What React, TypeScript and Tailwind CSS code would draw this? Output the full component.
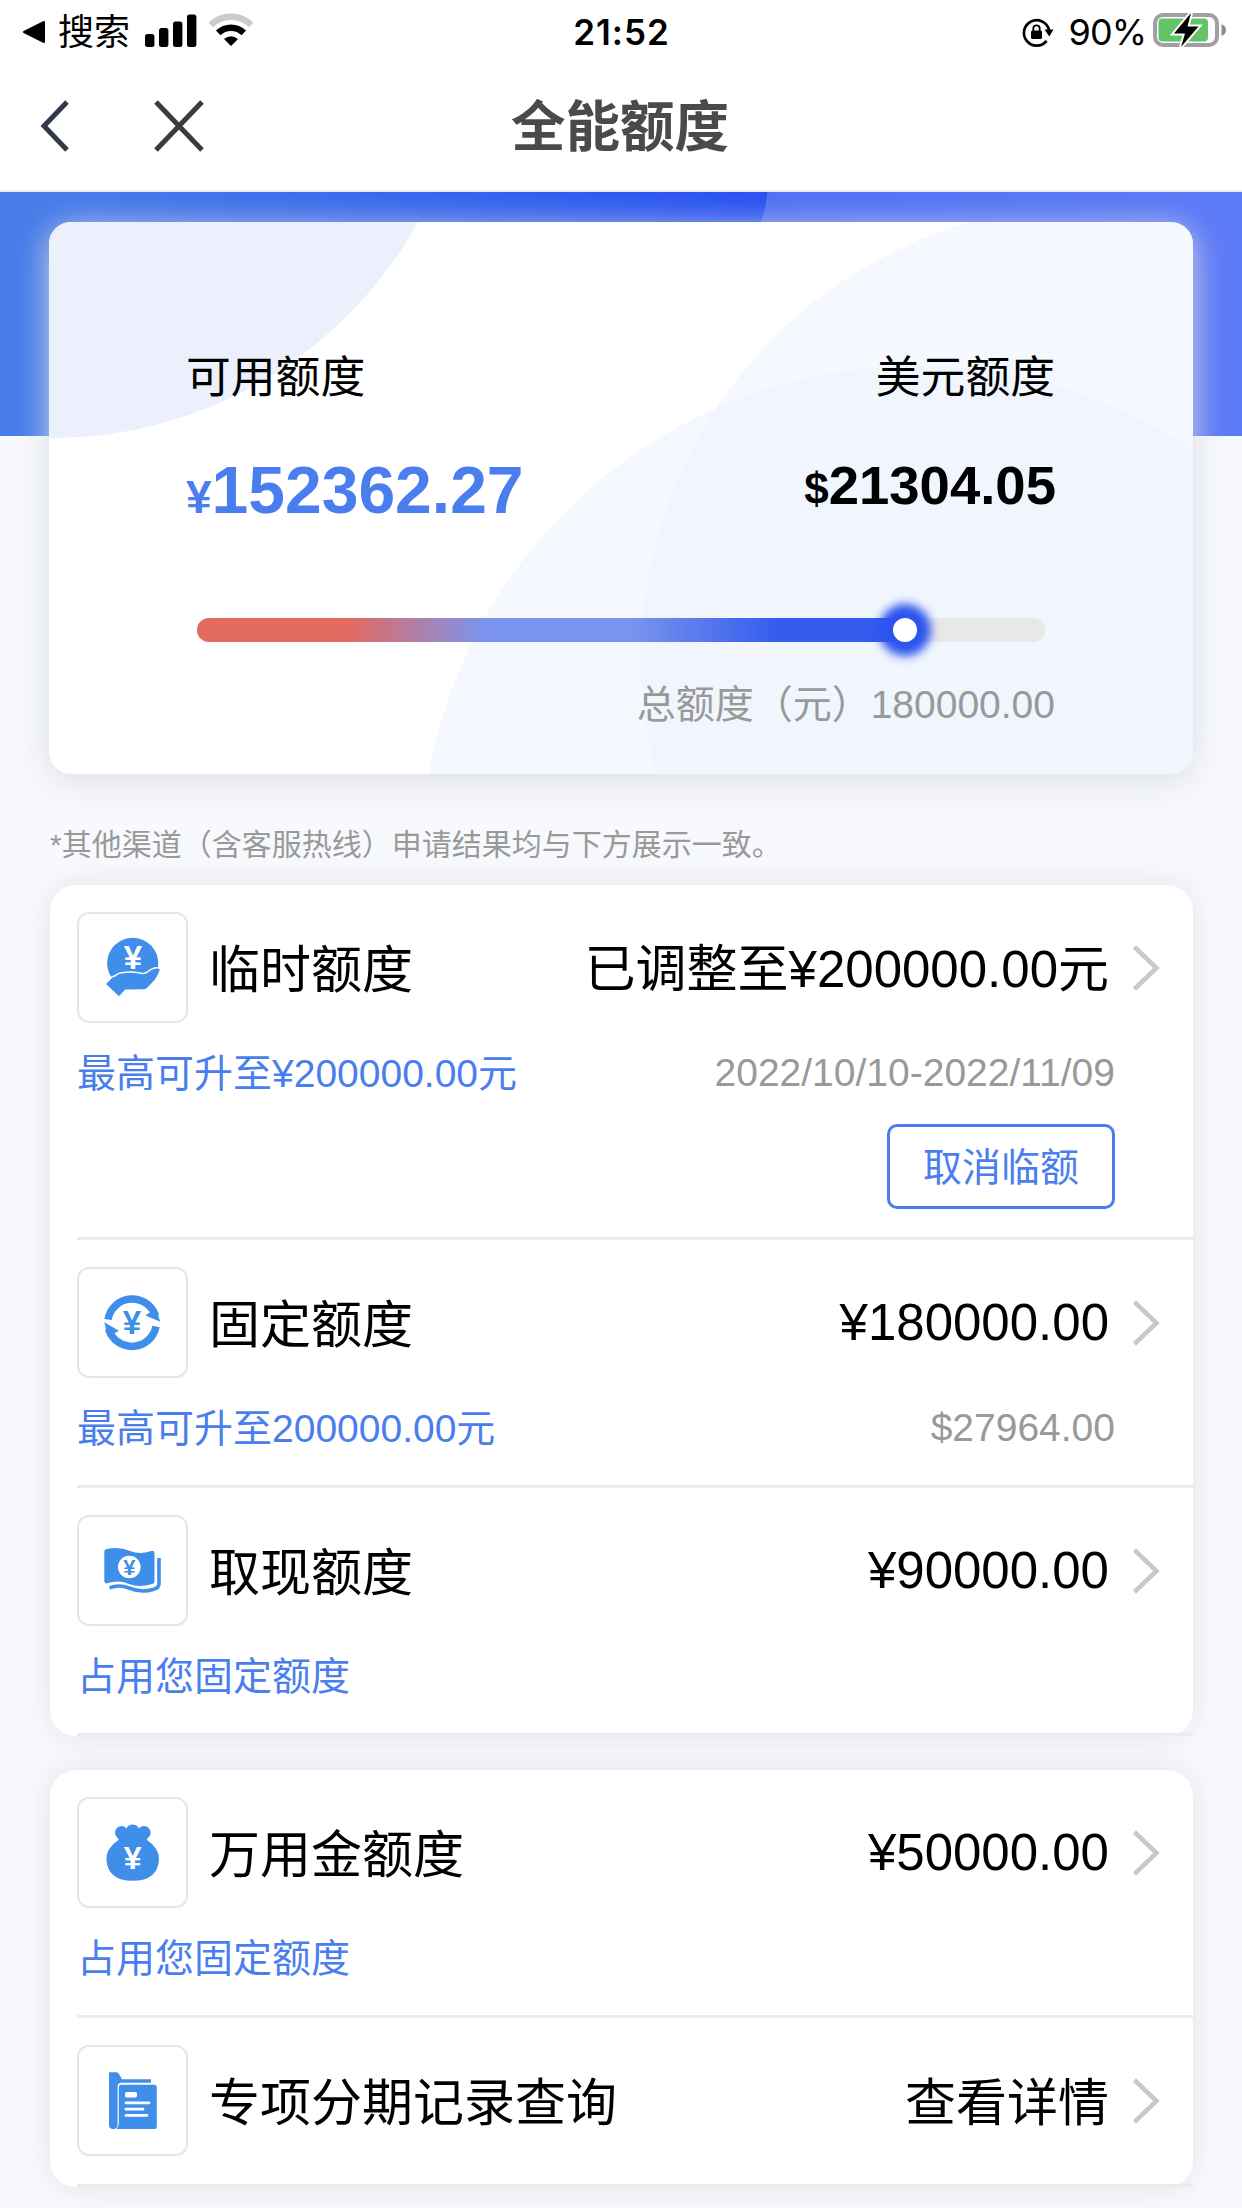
import type { ReactNode } from 'react'

const used = 84.9

function Yen({ x, y, size, fill }: { x: number; y: number; size: number; fill: string }) {
    return (
        <text
            x={x}
            y={y}
            fontSize={size}
            fill={fill}
            textAnchor="middle"
            className="font-['Liberation_Sans',sans-serif] font-bold"
        >
            ¥
        </text>
    )
}

function HandIcon() {
    return (
        <svg viewBox="0 0 111 111" className="h-full w-full">
            <circle cx="55.7" cy="51.3" r="25.6" fill="#3f8ee9" />
            <path
                d="M28 72 L35.5 64.5 Q38 64.5 40 62.5 Q42 60.6 46 60.4 Q56 59.4 64 61.3 Q68 62.2 71 59.5 Q77 54.5 82.5 56 Q84 57 83 59.5 Q81 64.5 78.5 68 L70.5 76.5 Q69 78 66 78 L48.5 78.3 L42 85.2 Z"
                fill="#3f8ee9"
                stroke="#fff"
                strokeWidth="1.5"
                strokeLinejoin="round"
            />
            <Yen x={56} y={57} size={33} fill="#fff" />
        </svg>
    )
}

function RefreshIcon() {
    return (
        <svg viewBox="0 0 111 111" className="h-full w-full">
            <path d="M31 52.5 A24.5 24.5 0 0 1 78.5 49" fill="none" stroke="#3f8ee9" strokeWidth="7.5" />
            <path d="M68.5 48.5 L79 41 L83.2 54.8 Z" fill="#3f8ee9" />
            <path d="M79 59.5 A24.5 24.5 0 0 1 31.5 62" fill="none" stroke="#3f8ee9" strokeWidth="7.5" />
            <path d="M27.2 55.2 L42 63.8 L31 70 Z" fill="#3f8ee9" />
            <Yen x={55} y={67} size={33} fill="#3f8ee9" />
        </svg>
    )
}

function CashIcon() {
    return (
        <svg viewBox="0 0 111 111" className="h-full w-full">
            <path
                d="M27.3 36.5 Q27.5 34.3 30 34 Q42 31.5 53 36 Q63 39.8 74 36 Q77.5 35 77.5 38 V66.5 Q77.5 68.5 75 69 Q63 73 52 69 Q42 64.5 30 68.3 Q27.3 69 27.3 66 Z"
                fill="#3f8ee9"
            />
            <path
                d="M32.5 72.8 Q42 69 52 73 Q64 78 76 74.5 Q82 73 82 69 V43"
                fill="none"
                stroke="#3f8ee9"
                strokeWidth="3.6"
            />
            <circle cx="52.3" cy="52" r="11.3" fill="#fff" />
            <Yen x={52.3} y={59.5} size={22} fill="#3f8ee9" />
        </svg>
    )
}

function BagIcon() {
    return (
        <svg viewBox="0 0 111 111" className="h-full w-full" fill="#3f8ee9">
            <circle cx="44.6" cy="35.7" r="6.6" />
            <circle cx="67" cy="35.7" r="6.6" />
            <rect x="49" y="27.4" width="13.4" height="14" rx="6.5" />
            <path d="M41 38 H70.5 L70 43 Q82 51 82 62 Q81 83.8 55.7 83.8 Q30.4 83.8 29.4 62 Q29.4 51 41.5 43 Z" />
            <Yen x={55.7} y={71.5} size={32} fill="#fff" />
        </svg>
    )
}

function RecordIcon() {
    return (
        <svg viewBox="0 0 111 111" className="h-full w-full" fill="#3f8ee9">
            <path d="M32 27.2 H39.5 Q41 27.2 42 29 L45 34.3 H74 V37.8 H44 Q40.6 38.3 40.6 42 V79 Q40.6 84 36.5 84 Q32 84 32 79.5 Z" />
            <path d="M44.5 39.7 H77.5 Q79.8 39.7 79.8 42 V81.5 Q79.8 84 77.5 84 H39.5 Q41.8 81 41.8 78 V42.500 Q41.8 39.7 44.5 39.7 Z" />
            <rect x="48" y="47" width="12" height="5.4" rx="1.6" fill="#fff" />
            <path
                d="M49 57.8 H72 M49 64.2 H66 M49 70.4 H70"
                stroke="#fff"
                strokeWidth="2.8"
                strokeLinecap="round"
            />
        </svg>
    )
}

function StatusBar() {
    return (
        <div className="flex h-16 items-center justify-between pr-3.5 pl-[22px]">
            <div className="flex w-[400px] items-center">
                <svg viewBox="0 0 24 24" className="h-6 w-6">
                    <path
                        d="M2 12 L22 2 V22 Z"
                        fill="#000"
                        stroke="#000"
                        strokeWidth="2"
                        strokeLinejoin="round"
                    />
                </svg>
                <span className="ml-3 pt-0.5 text-[36px] leading-none">搜索</span>
                <svg viewBox="0 0 52 34" className="ml-[15px] h-[34px] w-[52px] -translate-y-px">
                    <rect x="0" y="20" width="9.4" height="13" rx="2.5" />
                    <rect x="14" y="14" width="9.4" height="19" rx="2.5" />
                    <rect x="28" y="7.5" width="9.4" height="25.5" rx="2.5" />
                    <rect x="42" y="0.5" width="9.4" height="32.5" rx="2.5" />
                </svg>
                <svg viewBox="0 0 46 34" className="ml-[11px] h-[34px] w-[46px] -translate-y-0.5" fill="none">
                    <path d="M2.8 12 A29 29 0 0 1 43.2 12" stroke="#cbcbcb" strokeWidth="6.5" />
                    <path d="M10.2 19.8 A18.5 18.5 0 0 1 35.8 19.8" stroke="#000" strokeWidth="6.5" />
                    <path d="M16 26 Q23 20.5 30 26 L23 33 Z" fill="#000" />
                </svg>
            </div>
            <span className="pr-[7px] font-['Inter',sans-serif] text-[35px] leading-none font-semibold tracking-[1px]">
                21:52
            </span>
            <div className="flex w-[400px] items-center justify-end">
                <svg viewBox="0 0 34 32" className="h-8 w-[34px]">
                    <path
                        d="M25.6 24.8 A12.7 12.7 0 1 1 28 14"
                        fill="none"
                        stroke="#000"
                        strokeWidth="2.7"
                    />
                    <path d="M23.5 13.5 H32.5 L28.3 20.5 Z" />
                    <rect x="10" y="14.5" width="11" height="8.5" rx="1.5" />
                    <path
                        d="M12.3 15 V12.5 A3.2 3.2 0 0 1 18.7 12.5 V15"
                        fill="none"
                        stroke="#000"
                        strokeWidth="1.8"
                    />
                </svg>
                <span className="ml-3.5 font-['Inter',sans-serif] text-[36px] leading-none tracking-[-1px]">90%</span>
                <svg viewBox="0 0 76 36" className="ml-1.5 h-9 w-[76px] -translate-y-0.5">
                    <rect x="3" y="3" width="62" height="30" rx="8" fill="none" stroke="#a0a0a4" strokeWidth="4" />
                    <rect x="6.5" y="6.5" width="49.5" height="23" rx="4" fill="#62c466" />
                    <path d="M69.5 12 Q74 14 74 18 Q74 22 69.5 24 Z" fill="#8e8e92" />
                    <path
                        d="M39 1 L22 21.5 H33 L29 35 L46.5 14.5 H35.5 Z"
                        stroke="#fff"
                        strokeWidth="4"
                        paintOrder="stroke"
                    />
                </svg>
            </div>
        </div>
    )
}

function NavBar() {
    return (
        <div className="flex h-[126px] items-center justify-between px-10 pb-0.5">
            <div className="flex w-[300px] items-center">
                <svg viewBox="0 0 30 52" className="h-[52px] w-[30px]" fill="none">
                    <path d="M27 2 L4 26 L27 50" stroke="#323a4a" strokeWidth="5" />
                </svg>
                <svg viewBox="0 0 52 52" className="ml-[83px] h-[52px] w-[52px]" fill="none">
                    <path d="M3 2 L49 50 M49 2 L3 50" stroke="#3c3c3c" strokeWidth="5" />
                </svg>
            </div>
            <h1 className="pt-1 pr-0.5 text-[54.5px] leading-none font-bold text-[#4a4a4a]">全能额度</h1>
            <div className="w-[300px]" />
        </div>
    )
}

function QuotaCard() {
    return (
        <section className="relative px-[49px] pt-[30px]">
            <svg
                viewBox="0 0 1242 244"
                className="absolute top-0 left-0 h-[244px] w-full"
                preserveAspectRatio="none"
            >
                <defs>
                    <linearGradient id="base" x1="0" x2="1" y1="0" y2="0">
                        <stop offset="0.6" stopColor="#4d70f4" />
                        <stop offset="1" stopColor="#5d7af8" />
                    </linearGradient>
                    <linearGradient id="disc" gradientUnits="userSpaceOnUse" x1="0" x2="768" y1="120" y2="0">
                        <stop offset="0.1" stopColor="#477bea" />
                        <stop offset="1" stopColor="#2650f2" />
                    </linearGradient>
                </defs>
                <rect width="1242" height="244" fill="url(#base)" />
                <path d="M0 0 H767.5 Q766 16 761 30 Q735 150 660 244 H0 Z" fill="url(#disc)" />
            </svg>
            <div className="relative h-[552px] overflow-hidden rounded-[22px] bg-white px-[137px] shadow-[0_6px_34px_rgba(218,220,226,0.95)]">
                <svg viewBox="49 222 1144 552" className="absolute inset-0 h-full w-full">
                    <circle cx="52" cy="20" r="418" fill="#ecf0fc" />
                    <circle cx="1094" cy="658" r="453" fill="#ebf2fd" fillOpacity="0.5" />
                    <circle cx="916" cy="861" r="495" fill="#ebf1fe" fillOpacity="0.5" />
                </svg>
                <div className="relative flex h-full flex-col">
                    <div className="mt-[127px] flex justify-between pr-px text-[44.8px] leading-[56px]">
                        <span>可用额度</span>
                        <span>美元额度</span>
                    </div>
                    <div className="mt-[47px] flex items-start justify-between font-bold">
                        <span className="text-[66px] leading-[76px] text-[#4a7eee]">
                            <span className="text-[46px]">¥</span>152362.27
                        </span>
                        <span className="pt-px text-[54.5px] leading-[66px]">
                            <span className="text-[44px]">$</span>21304.05
                        </span>
                    </div>
                    <div className="mx-[11px] mt-[83px] h-6 rounded-full bg-[#e8e8e8]">
                        <div
                            className="relative h-6 rounded-full bg-[linear-gradient(90deg,#e36a60_21%,#7b94ee_40%,#7b94ee_60%,#335bee_81%)]"
                            style={{ width: `${used}%` }}
                        >
                            <div className="absolute top-0 right-0 h-6 w-6 rounded-full bg-white shadow-[0_0_10px_14px_#2c54ee]" />
                        </div>
                    </div>
                    <p className="mt-[35px] pr-px text-right text-[39px] leading-[56px] text-[#999]">
                        总额度（元）180000.00
                    </p>
                </div>
            </div>
        </section>
    )
}

function Arrow() {
    return (
        <svg viewBox="0 0 28 46" className="ml-[23px] h-[46px] w-[28px]" fill="none">
            <path d="M2.5 2 L24.5 23 L2.5 44" stroke="#c7c7cc" strokeWidth="4.5" />
        </svg>
    )
}

type LimitRowProps = {
    icon: ReactNode
    title: string
    value: ReactNode
    note?: string
    detail?: string
    action?: string
}

function LimitRow({ icon, title, value, note, detail, action }: LimitRowProps) {
    return (
        <div className="ml-[27px] border-b-[3px] border-[#ebebeb] pt-[27px] pb-7">
            <div className="flex items-center pr-[33px]">
                <div className="h-[111px] w-[111px] rounded-xl border-2 border-[#e6e6e6]">
                    <div className="-m-0.5 h-[111px] w-[111px]">{icon}</div>
                </div>
                <span className="ml-[21px] pt-1.5 text-[51px] leading-[60px]">{title}</span>
                <span className="ml-auto text-[51px] leading-[60px]">{value}</span>
                <Arrow />
            </div>
            {note && (
                <div className="mt-[22px] flex h-[57px] items-center justify-between pr-[78px] text-[39px] leading-[57px]">
                    <span className="text-[#4a7eee]">{note}</span>
                    <span className="pb-0.5 text-[#999]">{detail}</span>
                </div>
            )}
            {action && (
                <div className="mt-[22px] flex justify-end pr-[78px]">
                    <button className="h-[85px] w-[228px] rounded-[10px] border-[3px] border-[#4a7eee] pt-0.5 text-[39px] leading-none text-[#4a7eee]">
                        {action}
                    </button>
                </div>
            )}
        </div>
    )
}

export default function App() {
    return (
        <div className="h-[2208px] w-[1242px] overflow-hidden bg-[#f7f9fd] font-['Liberation_Sans','Noto_Sans_CJK_SC',sans-serif] text-black">
            <header className="h-48 border-b-2 border-[#ececf0] bg-white">
                <StatusBar />
                <NavBar />
            </header>

            <QuotaCard />

            <p className="mt-[51px] ml-[50px] text-[30px] leading-10 text-[#999]">
                *其他渠道（含客服热线）申请结果均与下方展示一致。
            </p>

            <div className="mt-5 mr-[49px] ml-[50px] rounded-[26px] bg-white shadow-[0_0_28px_rgba(200,202,210,0.45)]">
                <LimitRow
                    icon={<HandIcon />}
                    title="临时额度"
                    value={<span className="block pt-1">已调整至¥200000.00元</span>}
                    note="最高可升至¥200000.00元"
                    detail="2022/10/10-2022/11/09"
                    action="取消临额"
                />
                <LimitRow
                    icon={<RefreshIcon />}
                    title="固定额度"
                    value="¥180000.00"
                    note="最高可升至200000.00元"
                    detail="$27964.00"
                />
                <LimitRow icon={<CashIcon />} title="取现额度" value="¥90000.00" note="占用您固定额度" />
            </div>

            <div className="mt-[34px] mr-[49px] ml-[50px] rounded-[26px] bg-white shadow-[0_0_28px_rgba(200,202,210,0.45)]">
                <LimitRow icon={<BagIcon />} title="万用金额度" value="¥50000.00" note="占用您固定额度" />
                <LimitRow
                    icon={<RecordIcon />}
                    title="专项分期记录查询"
                    value={<span className="block pt-1.5">查看详情</span>}
                />
            </div>
        </div>
    )
}
